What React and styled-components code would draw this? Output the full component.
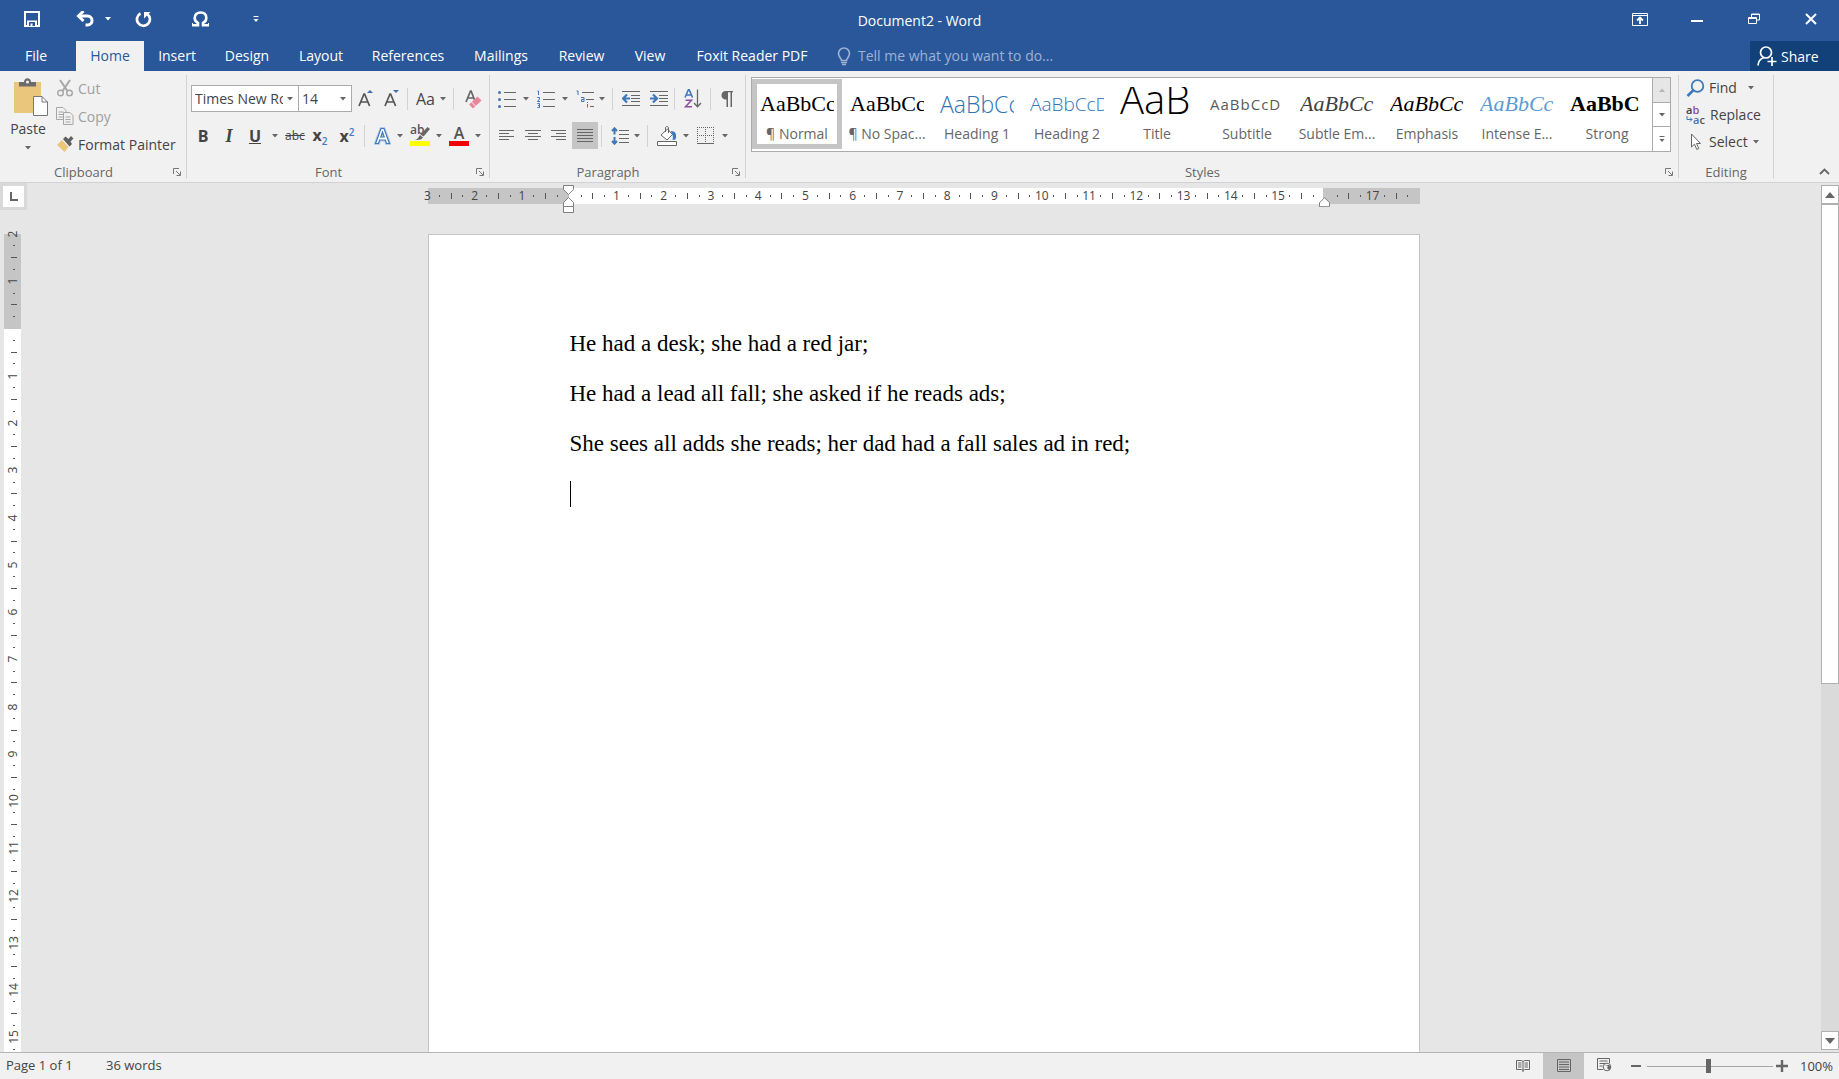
import React from 'react';
import styled, { createGlobalStyle, css } from 'styled-components';

const GlobalStyle = createGlobalStyle`
  * {
    box-sizing: border-box;
  }
  html, body, #root {
    height: 100%;
  }
  body {
    margin: 0;
    overflow: hidden;
    font-family: 'Open Sans', 'Noto Sans', sans-serif;
    font-size: 14px;
    color: #444;
  }
  button, input, select {
    font: inherit;
    color: inherit;
    margin: 0;
    padding: 0;
    border: 0;
    background: none;
    outline: none;
  }
  svg {
    display: block;
    flex: none;
  }
`

const Window = styled.div`
  display: flex;
  flex-direction: column;
  height: 100vh;
  background: #e6e6e6;
`

/* ---------- title bar ---------- */

const TitleBar = styled.header`
  display: grid;
  grid-template-columns: 1fr auto 1fr;
  align-items: center;
  height: 41px;
  background: #2a579a;
  color: #fff;
`

const QuickAccess = styled.div`
  display: flex;
  align-items: center;
  padding: 0 0 3px 12px;
`

const QuickButton = styled.button`
  display: flex;
  align-items: center;
  justify-content: center;
  width: ${p => p.$w}px;
  height: 32px;
`

const SplitButton = styled.span`
  display: flex;
  margin-left: 14px;
`

const DocTitle = styled.h1`
  margin: 0;
  font-size: 14px;
  font-weight: 400;
`

const WindowButtons = styled.div`
  display: flex;
  justify-content: flex-end;
  padding-bottom: 3px;
`

const WindowButton = styled.button`
  display: flex;
  align-items: center;
  justify-content: center;
  width: 57px;
  height: 36px;
`

/* ---------- tabs ---------- */

const TabBar = styled.nav`
  display: flex;
  height: 30px;
  background: #2a579a;
  color: #fff;
`

const Tab = styled.button`
  width: ${p => p.$w}px;
  white-space: nowrap;
  line-height: 30px;
  ${p => p.$active && css`
    background: #f1f1f1;
    color: #2a579a;
  `}

  &:first-child {
    margin-right: 4px;
  }
`

const TellMe = styled.label`
  display: flex;
  align-items: center;
  gap: 7px;
  margin-left: 14px;
  flex: 1;

  input {
    width: 240px;
    padding-bottom: 1px;
  }
  input::placeholder {
    color: #9db3d4;
    opacity: 1;
  }
`

const Share = styled.button`
  display: flex;
  align-items: center;
  gap: 4px;
  width: 89px;
  padding-left: 7px;
  background: #124078;
`

/* ---------- ribbon ---------- */

const Ribbon = styled.section`
  display: flex;
  height: 112px;
  background: #f1f1f1;
  border-bottom: 1px solid #d2d2d2;
`

const GroupBox = styled.div`
  display: flex;
  flex-direction: column;
  flex: ${p => p.$grow ? '1 1 0' : 'none'};
  min-width: 0;
  width: ${p => p.$w ? p.$w + 'px' : 'auto'};
  margin: 4px 0;
  border-right: 1px solid #d2d2d2;
`

const GroupBody = styled.div`
  flex: 1;
  padding: ${p => p.$pad};
`

const GroupLabel = styled.div`
  display: flex;
  align-items: center;
  height: 12px;
  padding-right: ${p => p.$launcher ? 5 : 0}px;
  font-size: 13px;
  line-height: 12px;
  color: #666;

  span {
    flex: 1;
    padding-right: ${p => p.$launcher ? 6 : 0}px;
    text-align: center;
  }
`

const Row = styled.div`
  display: flex;
  align-items: center;
  height: 27px;
  margin-bottom: 10px;
`

const ToolButton = styled.button`
  display: flex;
  align-items: center;
  justify-content: center;
  flex: none;
  width: ${p => p.$w}px;
  height: 27px;
  background: ${p => p.$pressed ? '#c5c5c5' : 'none'};
`

const MenuButton = styled.button`
  display: flex;
  align-items: center;
  flex: none;
  gap: ${p => p.$gap || 5}px;
  height: 27px;
  padding: 0 3px 0 ${p => p.$pad}px;
`

const Divider = styled.i`
  width: 1px;
  height: 22px;
  margin: 0 3px;
  background: #d2d2d2;
`

const Glyph = styled.span`
  font-size: 16px;
  line-height: 20px;
  font-weight: ${p => p.$weight || 700};
  ${p => p.$serif && css`
    font-family: 'Liberation Serif', serif;
    font-style: italic;
    font-size: 18px;
  `}
  ${p => p.$under && css`text-decoration: underline;`}
  ${p => p.$strike && css`
    font-size: 12px;
    font-weight: 400;
    text-decoration: line-through;
  `}

  sub, sup {
    font-size: 10px;
    line-height: 9px;
    font-weight: 600;
    color: #3d7cc0;
  }
`

const PasteButton = styled.button`
  display: flex;
  flex-direction: column;
  align-items: center;
  width: 56px;
  padding-top: 3px;

  svg:first-child {
    margin-left: 6px;
  }
  span {
    margin: 2px 0 7px;
    line-height: 20px;
  }
`

const ClipboardLayout = styled.div`
  display: flex;
`

const CommandList = styled.div`
  display: flex;
  flex-direction: column;
`

const Command = styled.button`
  display: flex;
  align-items: center;
  gap: 4px;
  height: ${p => p.$h || 28}px;
  padding-bottom: 2px;
  white-space: nowrap;
  color: ${p => p.disabled ? '#a0a0a0' : '#444'};
`

const FindText = styled.span`
  min-width: 34px;
  text-align: left;
`

const Combo = styled.span`
  position: relative;
  display: flex;
  align-items: center;
  width: ${p => p.$w}px;
  height: 27px;
  background: #fff;
  border: 1px solid #ababab;
  border-left-width: ${p => p.$joined ? 0 : 1}px;

  select {
    appearance: none;
    width: 100%;
    height: 25px;
    padding: 0 15px 0 3px;
    white-space: nowrap;
    overflow: hidden;
    text-overflow: clip;
  }
  svg {
    position: absolute;
    right: 4px;
    pointer-events: none;
  }
`

/* ---------- styles gallery ---------- */

const Gallery = styled.div`
  display: flex;
  height: 75px;
  border: 1px solid #ababab;
  background: #fff;
`

const GalleryItems = styled.div`
  display: flex;
  flex: 1;
  min-width: 0;
  overflow: hidden;
  padding-top: 1px;
`

const StyleItem = styled.button`
  flex: none;
  width: 90px;
  height: 70px;
  padding: 0 3px;
  border: 5px solid ${p => p.$selected ? '#c5c5c5' : 'transparent'};
`

const Sample = styled.span`
  display: flex;
  align-items: flex-end;
  height: 37px;
  margin-top: 3px;
  overflow: hidden;
  white-space: nowrap;
  font-family: ${p => p.$sans ? "'Open Sans', sans-serif" : "'Liberation Serif', serif"};
  font-size: ${p => p.$size || 22}px;
  font-style: ${p => p.$italic ? 'italic' : 'normal'};
  font-weight: ${p => p.$weight || 400};
  letter-spacing: ${p => p.$spaced ? '1px' : 'normal'};
  line-height: ${p => p.$lh || 40}px;
  color: ${p => p.$color || '#000'};
`

const StyleName = styled.span`
  display: block;
  height: 20px;
  margin: 0 -3px;
  line-height: 20px;
  white-space: nowrap;
  text-align: center;
  color: #666;
`

const GalleryScroll = styled.div`
  display: flex;
  flex-direction: column;
  width: 18px;
  border-left: 1px solid #ababab;

  button {
    display: flex;
    align-items: center;
    justify-content: center;
    flex: 1;
  }
  button + button {
    border-top: 1px solid #ababab;
  }
  button:disabled {
    background: #e6e6e6;
  }
`

const RibbonEnd = styled.div`
  display: flex;
  justify-content: flex-end;
  align-items: flex-end;
  width: 65px;
  padding: 0 9px 7px 0;
`

/* ---------- workspace ---------- */

const Workspace = styled.div`
  display: flex;
  flex: 1;
  min-height: 0;
`

const Canvas = styled.div`
  display: grid;
  grid-template-columns: 26px 1fr;
  grid-template-rows: 51px minmax(0, 1fr);
  flex: 1;
  min-width: 0;
  overflow: hidden;
`

const TabSelector = styled.button`
  display: flex;
  align-items: center;
  justify-content: center;
  width: 27px;
  height: 27px;
  background: #fff;
  border: 3px solid #d9d9d9;
`

const RulerH = styled.div`
  position: relative;
  display: flex;
  width: 992px;
  height: 16px;
  margin: 5px auto 0;
  background: linear-gradient(to right, #c5c5c5 141px, #fff 141px, #fff 895px, #c5c5c5 895px);
`

const RulerV = styled.div`
  display: flex;
  flex-direction: column;
  width: 17px;
  height: 1370px;
  margin-left: 4px;
  padding-left: 2px;
  background: linear-gradient(to bottom, #c5c5c5 95px, #fff 95px);
`

const Cell = styled.span`
  display: flex;
  flex: 1 1 0;
  min-width: 0;
  min-height: 0;
  flex-direction: ${p => p.$vertical ? 'column' : 'row'};
  align-items: center;
`

/* zero-length box, so that the mark is centred on its position */
const Mark = styled.span`
  display: flex;
  align-items: center;
  justify-content: center;
  ${p => p.$vertical ? 'height: 0;' : 'width: 0;'}
  font-size: 12px;
  line-height: 16px;

  span {
    flex: none;
    ${p => p.$vertical && 'transform: rotate(-90deg);'}
  }
  i {
    flex: none;
    background: #555;
    width: ${p => p.$vertical ? p.$len : 1}px;
    height: ${p => p.$vertical ? 1 : p.$len}px;
  }
`

const Indent = styled.svg`
  position: absolute;
  left: ${p => p.$left}px;
  top: ${p => p.$top}px;
`

const Page = styled.main`
  width: 992px;
  height: 1403px;
  margin: 0 auto;
  padding: 92px 141px;
  background: #fff;
  border: 1px solid #c6c6c6;
  font-family: 'Liberation Serif', serif;
  font-size: 23px;
  line-height: 34px;
  color: #000;

  p {
    margin: 0 0 16px;
    min-height: 34px;
  }
`

const CaretLine = styled.p`
  display: flex;
  align-items: center;
`

const Caret = styled.span`
  width: 1px;
  height: 26px;
  background: #000;
`

const ScrollBar = styled.div`
  display: flex;
  flex-direction: column;
  width: 18px;
  padding: 2px 0;
`

const ScrollButton = styled.button`
  display: flex;
  align-items: center;
  justify-content: center;
  height: 19px;
  background: #fff;
  border: 1px solid #b0b0b0;
`

const ScrollTrack = styled.div`
  flex: 1;
  background: #dadada;
`

const ScrollThumb = styled.div`
  height: 58%;
  background: #fff;
  border: 1px solid #b0b0b0;
`

/* ---------- status bar ---------- */

const StatusBar = styled.footer`
  display: flex;
  align-items: center;
  height: 27px;
  padding: 0 6px;
  background: #f1f1f1;
  border-top: 1px solid #b5b5b5;
  font-size: 13px;
  line-height: 18px;
`

const StatusText = styled.span`
  width: ${p => p.$w}px;
  padding-bottom: 2px;
`

const Spacer = styled.div`
  flex: 1;
`

const ViewButton = styled.button`
  display: flex;
  align-items: center;
  justify-content: center;
  width: 41px;
  height: 26px;
  padding-bottom: 2px;
  background: ${p => p.$active ? '#c5c5c5' : 'none'};
`

const ZoomButton = styled.button`
  display: flex;
  align-items: center;
  justify-content: center;
  width: ${p => p.$w}px;
  height: 26px;
`

const ZoomSlider = styled.input`
  appearance: none;
  width: 126px;
  height: 14px;
  background: linear-gradient(#a6a6a6, #a6a6a6) center / 100% 1px no-repeat;

  &::-webkit-slider-thumb {
    appearance: none;
    width: 5px;
    height: 14px;
    background: #666;
  }
`

const ZoomValue = styled.button`
  width: 42px;
  font-size: 13px;
  text-align: right;
`

/* ---------- icons ---------- */

const Svg = ({ w = 18, h = 18, children, ...rest }) => (
  <svg width={w} height={h} viewBox={`0 0 ${w} ${h}`} fill="none" aria-hidden="true" {...rest}>
    {children}
  </svg>
)

const Arrow = ({ color = '#666' }) => (
  <Svg w={8} h={4}><path d="M1 0h6L4 3.5z" fill={color} /></Svg>
)

const SaveIcon = () => (
  <Svg w={16} h={16}>
    <path d="M1 1h14v14H1z" stroke="#fff" strokeWidth="2" />
    <path d="M3 9.5h10V15H3z" fill="#fff" />
    <path d="M5 11h6v4H8.500v-2.500H6.500V15H5z" fill="#2a579a" />
  </Svg>
)

const UndoIcon = () => (
  <Svg w={19} h={16}>
    <path d="M2 5h9.500c6 0 6 9 0 9H9.500" stroke="#fff" strokeWidth="3" />
    <path d="M7.500 0L2.500 5l5 5" stroke="#fff" strokeWidth="3" />
  </Svg>
)

const RepeatIcon = () => (
  <Svg w={17} h={17}>
    <path d="M5.500 2.500A6.500 6.500 0 1 0 12.500 3.200" stroke="#fff" strokeWidth="2.700" />
    <path d="M9 1h6.500L9 7.500z" fill="#fff" />
  </Svg>
)

const OmegaIcon = () => (
  <Svg w={17} h={16}>
    <path d="M1 14.300h5V12C3.500 10.800 2.700 9 2.700 7c0-3.500 2.300-5.500 5.800-5.500s5.800 2 5.800 5.500c0 2-.8 3.800-3.300 5v2.300h5" stroke="#fff" strokeWidth="2.600" />
    <path d="M.5 12v3.500M16.500 12v3.500" stroke="#fff" />
  </Svg>
)

const CustomizeIcon = ({ color = '#fff' }) => (
  <Svg w={8} h={8}>
    <path d="M1.500 1.500h5" stroke={color} />
    <path d="M1.500 4h5L4 7z" fill={color} />
  </Svg>
)

const BulbIcon = () => (
  <Svg w={14} h={19}>
    <path d="M4.500 13.500c0-2-3-3.500-3-7a5.500 5.500 0 0 1 11 0c0 3.500-3 5-3 7z" stroke="#9db3d4" strokeWidth="1.600" />
    <path d="M4 15.500h6M5 17.500h4" stroke="#9db3d4" strokeWidth="1.500" />
  </Svg>
)

const PersonIcon = () => (
  <Svg w={20} h={20}>
    <circle cx="9" cy="6.500" r="5.500" stroke="#fff" strokeWidth="1.700" />
    <path d="M1 19.500c.3-4 2-6.500 5.500-7.700M15 11v9M10.500 15.500h9" stroke="#fff" strokeWidth="1.700" />
  </Svg>
)

const PasteIcon = () => (
  <Svg w={36} h={39}>
    <path d="M1 4h27v31H1z" fill="#eac57c" />
    <path d="M6 8.500V4h5c0-5 7-5 7 0h5v4.500z" fill="#6b6b6b" />
    <circle cx="14.500" cy="4" r="1.500" fill="#f1f1f1" />
    <path d="M20.500 18.500H29l5.500 5.500v13.500h-14z" fill="#fff" stroke="#777" />
    <path d="M29 18.500V24h5.500" stroke="#777" />
  </Svg>
)

const CutIcon = () => (
  <Svg w={18} h={18}>
    <path d="M4 1l7.500 11M14 1L6.500 12" stroke="#a6a6a6" strokeWidth="2" />
    <circle cx="4.500" cy="14" r="2.800" stroke="#a6a6a6" strokeWidth="1.400" />
    <circle cx="13.500" cy="14" r="2.800" stroke="#a6a6a6" strokeWidth="1.400" />
  </Svg>
)

const CopyIcon = () => (
  <Svg w={18} h={18}>
    <path d="M.5.5H7l3 3v9H.5zM2.500 5h5M2.500 7.500h5M2.500 10h5" stroke="#a6a6a6" />
    <path d="M7.500 5.500H14l3 3v9H7.500z" fill="#f1f1f1" stroke="#a6a6a6" />
    <path d="M9.500 10h5M9.500 12.500h5M9.500 15h5" stroke="#a6a6a6" />
  </Svg>
)

const PainterIcon = () => (
  <Svg w={18} h={18}>
    <path d="M6 5l6.500 7-4 5L1 10z" fill="#eac57c" />
    <path d="M7 4l2.500-2.500 3 2.500L15 1l2.500 2.500-3 3 1.500 2.500-2.500 2.500z" fill="#5f5f5f" />
  </Svg>
)

const GrowIcon = ({ shrink }) => (
  <Svg w={18} h={20}>
    <path d="M2 17L7 5h.6l5 12M4 13h6.500" stroke="#555" strokeWidth="1.700" />
    <path d={shrink ? 'M10 1h6l-3 3z' : 'M10 4h6l-3-3z'} fill="#3f6fb0" />
  </Svg>
)

const ClearIcon = () => (
  <Svg w={18} h={20}>
    <path d="M2 13L6.500 2h.6l3.500 9M4 9h5.500" stroke="#666" strokeWidth="1.700" />
    <path d="M5 15.500l8.500-8 4 4-8.500 8z" fill="#e8879c" />
    <path d="M7.500 13l4 4" stroke="#f1f1f1" />
  </Svg>
)

const EffectIcon = () => (
  <Svg w={17} h={18}>
    <path d="M1.500 16.500L7 1.500h3l5.500 15h-3L11.300 13H5.700l-1.200 3.500zM6.800 10h3.400L8.500 5z" fill="#fff" stroke="#b5d0ee" strokeWidth="3" />
    <path d="M1.500 16.500L7 1.500h3l5.500 15h-3L11.300 13H5.700l-1.200 3.500zM6.800 10h3.400L8.500 5z" fill="#fff" stroke="#3f78b8" strokeWidth="1.200" />
  </Svg>
)

const Swatch = styled.span`
  display: flex;
  flex-direction: column;
  align-items: center;
  width: 20px;
  border-bottom: 5px solid ${p => p.$color};
  font-weight: 600;
  font-size: ${p => p.$small ? 12 : 16}px;
  line-height: 16px;
  color: #555;
`

const HighlightLetters = styled.span`
  position: relative;
  width: 20px;
  height: 16px;
  text-align: left;
  line-height: 10px;

  svg {
    position: absolute;
    right: 0;
    top: 2px;
  }
`

const PenIcon = () => (
  <Svg w={15} h={14}>
    <path d="M12.500 0L15 2 8.500 9.500l-3-2z" fill="#666" />
    <path d="M5 8l3 2.500C6.500 13 3 13 0 13c3-.8 3.500-3 5-5z" fill="#666" />
  </Svg>
)

const blue = '#3f78b8'
const grey = '#666'

const BulletsIcon = () => (
  <Svg>
    <path d="M6 2.500h12M6 9.500h12M6 16.500h12" stroke={grey} />
    <circle cx="1.500" cy="2.500" r="1.500" fill={blue} />
    <circle cx="1.500" cy="9.500" r="1.500" fill={blue} />
    <circle cx="1.500" cy="16.500" r="1.500" fill={blue} />
  </Svg>
)

const NumberingIcon = () => (
  <Svg>
    <path d="M6 2.500h12M6 9.500h12M6 16.500h12" stroke={grey} />
    <path d="M.5 1h1v4M.2 7.500h2.300v1.500L.5 11.500h2.500M.3 13.500h2.200v4H.3M1 15.500h1.500" stroke={blue} />
  </Svg>
)

const MultilevelIcon = () => (
  <Svg>
    <path d="M6 2.500h12M10 9.500h8M14 16.500h4" stroke={grey} />
    <path d="M.5 1h1.500v4M5 7.500h3v4H5.500v-2H8M11.500 14v3.500M11.500 12v1" stroke={blue} />
  </Svg>
)

const IndentIcon = ({ out }) => (
  <Svg>
    <path d="M0 1.500h18M9 5.500h9M9 8.500h9M9 11.500h9M0 15.500h18" stroke={grey} />
    {out
      ? <path d="M8 8.500H2M5 4.500l-4 4 4 4" stroke={blue} strokeWidth="2.200" />
      : <path d="M0 8.500h6M3 4.500l4 4-4 4" stroke={blue} strokeWidth="2.200" />}
  </Svg>
)

const SortIcon = () => (
  <Svg w={18} h={19}>
    <path d="M1 8.500L4.500.5h.6L8.500 8.500M2.500 6h5" stroke={blue} strokeWidth="1.600" />
    <path d="M1.500 11.300h6L1.500 17.700h6.500" stroke="#8a4f9e" strokeWidth="1.500" />
    <path d="M13.500.5v17M10 14l3.500 3.700L17 14" stroke={grey} strokeWidth="1.300" />
  </Svg>
)

const PilcrowIcon = () => (
  <Svg w={12} h={16}>
    <path d="M5 0h7v1.200h-1V16H9.500V1.200H7V16H5.500V8.500C2 8.500.5 6.500.5 4.200S2 0 5 0z" fill={grey} />
  </Svg>
)

const alignPaths = {
  left: 'M0 1.500h15M0 4.500h10M0 7.500h15M0 10.500h10',
  center: 'M0 1.500h16M3 4.500h10M0 7.500h16M3 10.500h10',
  right: 'M0 1.500h15M5 4.500h10M0 7.500h15M5 10.500h10',
  justify: 'M0 .5h16M0 3.500h16M0 6.500h16M0 9.500h16M0 12.500h16',
}

const AlignIcon = ({ kind }) => (
  <Svg w={16} h={13}><path d={alignPaths[kind]} stroke={grey} /></Svg>
)

const SpacingIcon = () => (
  <Svg>
    <path d="M8 3.500h10M8 7.500h10M8 11.500h10M8 15.500h10" stroke={grey} />
    <path d="M3.500 1.500v6M1 4l2.500-2.700L6 4M3.500 10v6.500M1 14l2.500 2.700L6 14" stroke={blue} strokeWidth="2" />
  </Svg>
)

const ShadingIcon = () => (
  <Svg w={20} h={20}>
    <path d="M4 9l6.500-6 5 5.500L10 14z" fill="#fff" stroke={grey} />
    <path d="M8.500 6V2c0-2 3-2 3 0v5" stroke={grey} />
    <path d="M14 5c5 0 6 4 4.500 8.500L15.500 14c.5-2 1-4-1-7z" fill={blue} />
    <path d="M.5 15.500h19v4H.5z" fill="#fff" stroke={grey} />
  </Svg>
)

const BordersIcon = () => (
  <Svg>
    <path d="M0 .5h18M0 8.500h18M.5 0v16M8.500 0v16M16.500 0v16" stroke={grey} strokeDasharray="1 1" />
    <path d="M0 16.500h17" stroke={grey} />
  </Svg>
)

const LauncherIcon = () => (
  <Svg w={8} h={8}>
    <path d="M.5 6V.5H6M3 3l4 4M7.500 3.500v4h-4" stroke="#777" />
  </Svg>
)

const FindIcon = () => (
  <Svg w={19} h={18}>
    <circle cx="11.500" cy="7" r="5.800" stroke={blue} strokeWidth="1.800" />
    <path d="M7.300 11.300L1.500 17" stroke={blue} strokeWidth="2.600" />
  </Svg>
)

const ReplaceLetters = styled.span`
  display: flex;
  flex-direction: column;
  width: 20px;
  font-size: 11px;
  font-weight: 600;
  line-height: 10px;
  text-align: left;

  b {
    font-weight: 600;
    color: #8a4f9e;
  }
  span:last-child {
    display: flex;
    align-items: center;
    color: #555;
  }
  em {
    font-style: normal;
    color: #3f78b8;
  }
`

const SelectIcon = () => (
  <Svg w={19} h={18}>
    <path d="M5.500 1v13l3-2.800 2.300 5.300 2-1-2.300-5h4z" fill="#fff" stroke={grey} />
  </Svg>
)

/* ---------- data ---------- */

const tabs = [
  { name: 'File', w: 72 },
  { name: 'Home', w: 68, active: true },
  { name: 'Insert', w: 66 },
  { name: 'Design', w: 74 },
  { name: 'Layout', w: 74 },
  { name: 'References', w: 100 },
  { name: 'Mailings', w: 86 },
  { name: 'Review', w: 75 },
  { name: 'View', w: 62 },
  { name: 'Foxit Reader PDF', w: 142 },
]

const stylesList = [
  { name: '¶ Normal', text: 'AaBbCc', selected: true },
  { name: '¶ No Spac...', text: 'AaBbCc' },
  { name: 'Heading 1', text: 'AaBbCc', sans: true, weight: 300, size: 23, color: '#2e74b5' },
  { name: 'Heading 2', text: 'AaBbCcD', sans: true, weight: 300, size: 19, color: '#2e74b5' },
  { name: 'Title', text: 'AaB', sans: true, weight: 300, size: 40, lh: 50 },
  { name: 'Subtitle', text: 'AaBbCcD', sans: true, size: 15, spaced: true, color: '#5a5a5a' },
  { name: 'Subtle Em...', text: 'AaBbCc', italic: true, color: '#404040' },
  { name: 'Emphasis', text: 'AaBbCc', italic: true },
  { name: 'Intense E...', text: 'AaBbCc', italic: true, color: '#5b9bd5' },
  { name: 'Strong', text: 'AaBbC', weight: 700 },
]

const lines = [
  'He had a desk; she had a red jar;',
  'He had a lead all fall; she asked if he reads ads;',
  'She sees all adds she reads; her dad had a fall sales ad in red;',
]

/* ---------- parts ---------- */

const Group = ({ label, launcher, children, pad = '0', ...rest }) => (
  <GroupBox {...rest}>
    <GroupBody $pad={pad}>{children}</GroupBody>
    <GroupLabel $launcher={launcher}>
      <span>{label}</span>
      {launcher && <button aria-label={`${label} settings`}><LauncherIcon /></button>}
    </GroupLabel>
  </GroupBox>
)

/* four marks per centimetre: number, dot, line, dot */
const RulerMarks = ({ from, count, vertical, skip = [] }) => (
  Array.from({ length: count * 4 }, (_, i) => {
    const cm = from + Math.floor(i / 4)
    const part = i % 4
    const hidden = part === 0 && (cm === 0 || skip.includes(cm))
    return (
      <Cell key={i} $vertical={vertical}>
        {!hidden && (
          <Mark $vertical={vertical} $len={part === 2 ? 6 : 2}>
            {part === 0 ? <span>{Math.abs(cm)}</span> : <i />}
          </Mark>
        )}
      </Cell>
    )
  })
)

const ClipboardGroup = () => (
  <Group label="Clipboard" launcher $w={187}>
    <ClipboardLayout>
      <PasteButton>
        <PasteIcon />
        <span>Paste</span>
        <Arrow />
      </PasteButton>
      <CommandList>
        <Command disabled><CutIcon />Cut</Command>
        <Command disabled><CopyIcon />Copy</Command>
        <Command><PainterIcon />Format Painter</Command>
      </CommandList>
    </ClipboardLayout>
  </Group>
)

const FontGroup = () => (
  <Group label="Font" launcher pad="10px 0 0 4px" $w={303}>
    <Row>
      <Combo $w={108}>
        <select aria-label="Font"><option>Times New Roman</option></select>
        <Arrow />
      </Combo>
      <Combo $w={53} $joined>
        <select aria-label="Font size"><option>14</option></select>
        <Arrow />
      </Combo>
      <ToolButton $w={28} aria-label="Increase font size"><GrowIcon /></ToolButton>
      <ToolButton $w={24} aria-label="Decrease font size"><GrowIcon shrink /></ToolButton>
      <Divider />
      <MenuButton $pad={5} $gap={4}><Glyph $weight={400}>Aa</Glyph><Arrow /></MenuButton>
      <Divider />
      <ToolButton $w={32} aria-label="Clear formatting"><ClearIcon /></ToolButton>
    </Row>
    <Row>
      <ToolButton $w={24}><Glyph>B</Glyph></ToolButton>
      <ToolButton $w={28}><Glyph $serif>I</Glyph></ToolButton>
      <ToolButton $w={24}><Glyph $under>U</Glyph></ToolButton>
      <ToolButton $w={16} aria-label="Underline style"><Arrow /></ToolButton>
      <ToolButton $w={24}><Glyph $strike>abc</Glyph></ToolButton>
      <ToolButton $w={26}><Glyph>x<sub>2</sub></Glyph></ToolButton>
      <ToolButton $w={28}><Glyph>x<sup>2</sup></Glyph></ToolButton>
      <Divider />
      <MenuButton $pad={6} aria-label="Text effects"><EffectIcon /><Arrow /></MenuButton>
      <MenuButton $pad={3}>
        <Swatch $color="#ffff00" $small>
          <HighlightLetters>ab<PenIcon /></HighlightLetters>
        </Swatch>
        <Arrow />
      </MenuButton>
      <MenuButton $pad={3}><Swatch $color="#f00000">A</Swatch><Arrow /></MenuButton>
    </Row>
  </Group>
)

const ParagraphGroup = () => (
  <Group label="Paragraph" launcher pad="10px 0 0 4px" $w={256}>
    <Row>
      <MenuButton $pad={4} $gap={6} aria-label="Bullets"><BulletsIcon /><Arrow /></MenuButton>
      <MenuButton $pad={4} $gap={6} aria-label="Numbering"><NumberingIcon /><Arrow /></MenuButton>
      <MenuButton $pad={4} $gap={4} aria-label="Multilevel list"><MultilevelIcon /><Arrow /></MenuButton>
      <Divider />
      <ToolButton $w={30} aria-label="Decrease indent"><IndentIcon out /></ToolButton>
      <ToolButton $w={25} aria-label="Increase indent"><IndentIcon /></ToolButton>
      <Divider />
      <ToolButton $w={29} aria-label="Sort"><SortIcon /></ToolButton>
      <Divider />
      <ToolButton $w={26} aria-label="Show marks"><PilcrowIcon /></ToolButton>
    </Row>
    <Row>
      <ToolButton $w={26} aria-label="Align left"><AlignIcon kind="left" /></ToolButton>
      <ToolButton $w={26} aria-label="Center"><AlignIcon kind="center" /></ToolButton>
      <ToolButton $w={26} aria-label="Align right"><AlignIcon kind="right" /></ToolButton>
      <ToolButton $w={26} $pressed aria-label="Justify"><AlignIcon kind="justify" /></ToolButton>
      <Divider />
      <MenuButton $pad={6} $gap={4} aria-label="Line spacing"><SpacingIcon /><Arrow /></MenuButton>
      <Divider />
      <MenuButton $pad={6} aria-label="Shading"><ShadingIcon /><Arrow /></MenuButton>
      <MenuButton $pad={4} $gap={6} aria-label="Borders"><BordersIcon /><Arrow /></MenuButton>
    </Row>
  </Group>
)

const StylesGroup = () => (
  <Group label="Styles" launcher pad="2px 7px 0 5px" $grow>
    <Gallery>
      <GalleryItems>
        {stylesList.map(s => (
          <StyleItem key={s.name} $selected={s.selected}>
            <Sample
              $sans={s.sans}
              $size={s.size}
              $weight={s.weight}
              $italic={s.italic}
              $spaced={s.spaced}
              $lh={s.lh}
              $color={s.color}
            >
              {s.text}
            </Sample>
            <StyleName>{s.name}</StyleName>
          </StyleItem>
        ))}
      </GalleryItems>
      <GalleryScroll>
        <button disabled aria-label="Previous row">
          <Svg w={8} h={4}><path d="M1 4h6L4 .5z" fill="#b5b5b5" /></Svg>
        </button>
        <button aria-label="Next row"><Arrow /></button>
        <button aria-label="More styles"><CustomizeIcon color="#666" /></button>
      </GalleryScroll>
    </Gallery>
  </Group>
)

const EditingGroup = () => (
  <Group label="Editing" pad="0 0 0 7px" $w={95}>
    <CommandList>
      <Command $h={27}><FindIcon /><FindText>Find</FindText><Arrow /></Command>
      <Command $h={27}>
        <ReplaceLetters>
          <span>a<b>b</b></span>
          <span><Svg w={7} h={7}><path d="M1 0v3.500h5M4 1.500l2 2-2 2" stroke={blue} /></Svg><em>a</em>c</span>
        </ReplaceLetters>
        Replace
      </Command>
      <Command $h={27}><SelectIcon />Select<Arrow /></Command>
    </CommandList>
  </Group>
)

const App = () => (
  <Window>
    <GlobalStyle />
    <TitleBar>
      <QuickAccess>
        <QuickButton $w={40} aria-label="Save"><SaveIcon /></QuickButton>
        <SplitButton>
          <QuickButton $w={38} aria-label="Undo"><UndoIcon /></QuickButton>
          <QuickButton $w={8} aria-label="Undo history"><Arrow color="#fff" /></QuickButton>
        </SplitButton>
        <QuickButton $w={62} aria-label="Repeat"><RepeatIcon /></QuickButton>
        <QuickButton $w={52} aria-label="Symbol"><OmegaIcon /></QuickButton>
        <QuickButton $w={60} aria-label="Customize toolbar"><CustomizeIcon /></QuickButton>
      </QuickAccess>
      <DocTitle>Document2 - Word</DocTitle>
      <WindowButtons>
        <WindowButton aria-label="Ribbon display options">
          <Svg w={16} h={13}>
            <path d="M.5.5h15v12H.5zM.5 2.500h15" stroke="#fff" />
            <path d="M8 11V5M5 7.500L8 4.500l3 3" stroke="#fff" strokeWidth="1.800" />
          </Svg>
        </WindowButton>
        <WindowButton aria-label="Minimize">
          <Svg w={12} h={8}><path d="M0 6h12" stroke="#fff" strokeWidth="2" /></Svg>
        </WindowButton>
        <WindowButton aria-label="Restore">
          <Svg w={12} h={12}>
            <path d="M.5 4.500h8v6h-8zM.5 5.500h8M3.500 4V1h8v6H9M3.500 1.500h8" stroke="#fff" />
          </Svg>
        </WindowButton>
        <WindowButton aria-label="Close">
          <Svg w={12} h={12}><path d="M1 1l10 10M11 1L1 11" stroke="#fff" strokeWidth="2" /></Svg>
        </WindowButton>
      </WindowButtons>
    </TitleBar>

    <TabBar>
      {tabs.map(t => (
        <Tab key={t.name} $w={t.w} $active={t.active}>{t.name}</Tab>
      ))}
      <TellMe>
        <BulbIcon />
        <input aria-label="Tell me" placeholder="Tell me what you want to do..." />
      </TellMe>
      <Share><PersonIcon />Share</Share>
    </TabBar>

    <Ribbon>
      <ClipboardGroup />
      <FontGroup />
      <ParagraphGroup />
      <StylesGroup />
      <EditingGroup />
      <RibbonEnd>
        <button aria-label="Collapse the ribbon">
          <Svg w={11} h={7}><path d="M1 6l4.500-4.500L10 6" stroke="#666" strokeWidth="1.800" /></Svg>
        </button>
      </RibbonEnd>
    </Ribbon>

    <Workspace>
      <Canvas>
        <TabSelector aria-label="Tab stop">
          <Svg w={10} h={9}><path d="M2 0v8h7" stroke="#666" strokeWidth="2" /></Svg>
        </TabSelector>
        <div>
          <RulerH>
            <RulerMarks from={-3} count={21} skip={[16]} />
            <Indent $left={135} $top={-3} width="11" height="28" viewBox="0 0 11 28">
              <path d="M.5.5h10v4l-5 5-5-5zM5.500 12.500l5 5v4H.5v-4zM.5 21.500h10v6H.5z" fill="#fff" stroke="#808080" />
            </Indent>
            <Indent $left={891} $top={9} width="11" height="10" viewBox="0 0 11 10">
              <path d="M5.500.7l5 5v4H.5v-4z" fill="#fff" stroke="#808080" />
            </Indent>
          </RulerH>
        </div>
        <RulerV>
          <RulerMarks from={-2} count={29} vertical />
        </RulerV>
        <Page>
          {lines.map(line => <p key={line}>{line}</p>)}
          <CaretLine><Caret /></CaretLine>
        </Page>
      </Canvas>
      <ScrollBar>
        <ScrollButton aria-label="Scroll up">
          <Svg w={10} h={6}><path d="M0 6h10L5 0z" fill="#666" /></Svg>
        </ScrollButton>
        <ScrollTrack><ScrollThumb /></ScrollTrack>
        <ScrollButton aria-label="Scroll down">
          <Svg w={10} h={6}><path d="M0 0h10L5 6z" fill="#666" /></Svg>
        </ScrollButton>
      </ScrollBar>
    </Workspace>

    <StatusBar>
      <StatusText $w={100}>Page 1 of 1</StatusText>
      <StatusText $w={100}>36 words</StatusText>
      <Spacer />
      <ViewButton aria-label="Read mode">
        <Svg w={14} h={13}>
          <path d="M.5 1.500h5L7 2.500l1.500-1h5v9h-5L7 11.500l-1.500-1h-5zM7 2v11M2 4h3.500M2 6h3.500M2 8h3.500M8.500 4H12M8.500 6H12M8.500 8H12" stroke="#666" />
        </Svg>
      </ViewButton>
      <ViewButton $active aria-label="Print layout">
        <Svg w={14} h={13}>
          <path d="M.5.5h13v12H.5zM2 3h10M2 5.500h10M2 8h10M2 10.500h10" stroke="#666" />
        </Svg>
      </ViewButton>
      <ViewButton aria-label="Web layout">
        <Svg w={15} h={14}>
          <path d="M6 11.500H.5V.5h12V5M2.500 3h8M2.500 5.500h6M2.500 8h3" stroke="#666" />
          <circle cx="10" cy="9" r="3.800" stroke="#666" />
          <path d="M8 7l3 1-1 2 2 2c2-1 2-4 0-5z" fill="#666" />
        </Svg>
      </ViewButton>
      <ZoomButton $w={22} aria-label="Zoom out">
        <Svg w={10} h={10}><path d="M0 5h10" stroke="#666" strokeWidth="2" /></Svg>
      </ZoomButton>
      <ZoomSlider type="range" min="0" max="100" defaultValue="49" aria-label="Zoom" />
      <ZoomButton $w={18} aria-label="Zoom in">
        <Svg w={12} h={12}><path d="M0 6h12M6 0v12" stroke="#666" strokeWidth="2.400" /></Svg>
      </ZoomButton>
      <ZoomValue>100%</ZoomValue>
    </StatusBar>
  </Window>
)

export default App
